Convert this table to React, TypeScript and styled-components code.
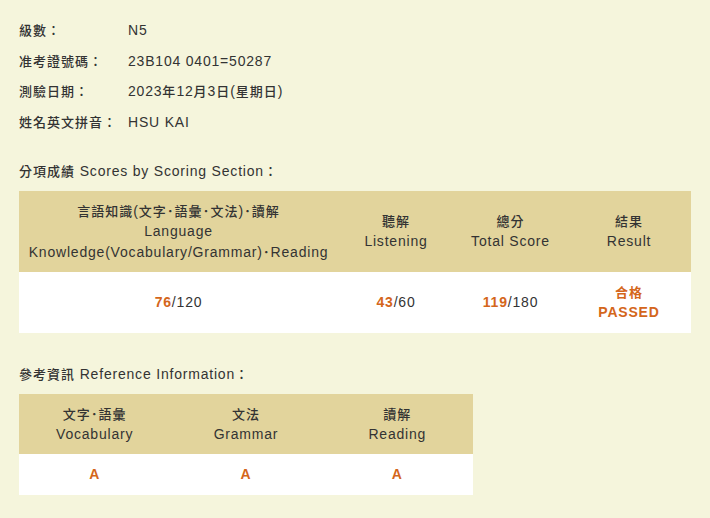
import React from "react";
import styled, { createGlobalStyle } from "styled-components";

const GlobalStyle = createGlobalStyle`
  html, body {
    margin: 0;
    padding: 0;
    background: #f5f5dc;
  }
  body {
    font-family: "Liberation Sans", "Noto Sans CJK TC", sans-serif;
    font-size: 14px;
    color: #333;
    letter-spacing: 0.8px;
  }
`;

const Page = styled.div`
  padding: 15px 19px 24px 19px;
  width: 672px;
`;

// CJK glyphs are set a bit smaller than the latin text, as on the original page
const Han = styled.span`
  font-size: 13px;
  font-weight: 500;
  letter-spacing: 1px;
  line-height: 1;
`;

const CJK = /([\u3000-\u30ff\u4e00-\u9fff\uff01-\uff5e]+)/;

const T: React.FC<{ children: string }> = ({ children }) => (
  <>
    {children
      .split(CJK)
      .filter(Boolean)
      .map((part, i) => (CJK.test(part) ? <Han key={i}>{part}</Han> : <React.Fragment key={i}>{part}</React.Fragment>))}
  </>
);

const Lines: React.FC<{ lines: string[] }> = ({ lines }) => (
  <>
    {lines.map((l, i) => (
      <React.Fragment key={i}>
        {i > 0 && <br />}
        <T>{l}</T>
      </React.Fragment>
    ))}
  </>
);

const InfoList = styled.dl`
  margin: 0;
`;

const InfoRow = styled.div`
  display: flex;
  line-height: 30.5px;
`;

const InfoLabel = styled.dt`
  width: 109px;
  flex-shrink: 0;
`;

const InfoValue = styled.dd`
  margin: 0;
`;

const SectionTitle = styled.h3<{ $top: number }>`
  margin: ${(p) => p.$top}px 0 10px 0;
  font-size: 14px;
  font-weight: 400;
  line-height: 20px;
`;

const Table = styled.table<{ $width: number }>`
  width: ${(p) => p.$width}px;
  border-collapse: collapse;
  table-layout: fixed;
`;

const HeadCell = styled.th<{ $width?: number }>`
  box-sizing: border-box;
  background: #e2d49c;
  font-weight: 400;
  padding: 10px 2px;
  line-height: 20.3px;
  text-align: center;
  width: ${(p) => (p.$width ? `${p.$width}px` : "auto")};
`;

const BodyCell = styled.td`
  background: #fff;
  padding: 10px 2px;
  line-height: 20.5px;
  text-align: center;
`;

const Mark = styled.span`
  color: #d4661b;
  font-weight: 700;

  ${Han} {
    font-weight: 700;
  }
`;

const Score: React.FC<{ got: number; max: number }> = ({ got, max }) => (
  <>
    <Mark>{got}</Mark>/{max}
  </>
);

const info = [
  ["級數：", "N5"],
  ["准考證號碼：", "23B104 0401=50287"],
  ["測驗日期：", "2023年12月3日(星期日)"],
  ["姓名英文拼音：", "HSU KAI"],
];

const sections = [
  { w: 319, lines: ["言語知識(文字･語彙･文法)･讀解", "Language", "Knowledge(Vocabulary/Grammar)･Reading"] },
  { w: 116, lines: ["聽解", "Listening"] },
  { w: 113, lines: ["總分", "Total Score"] },
  { w: 0, lines: ["結果", "Result"] },
];

const reference = [
  ["文字･語彙", "Vocabulary"],
  ["文法", "Grammar"],
  ["讀解", "Reading"],
];

export default function App() {
  return (
    <Page>
      <GlobalStyle />
      <InfoList>
        {info.map(([k, v]) => (
          <InfoRow key={k}>
            <InfoLabel>
              <T>{k}</T>
            </InfoLabel>
            <InfoValue>
              <T>{v}</T>
            </InfoValue>
          </InfoRow>
        ))}
      </InfoList>

      <SectionTitle $top={24}>
        <T>分項成績 Scores by Scoring Section：</T>
      </SectionTitle>
      <Table $width={672}>
        <thead>
          <tr>
            {sections.map((s, i) => (
              <HeadCell key={i} $width={s.w || undefined}>
                <Lines lines={s.lines} />
              </HeadCell>
            ))}
          </tr>
        </thead>
        <tbody>
          <tr>
            <BodyCell>
              <Score got={76} max={120} />
            </BodyCell>
            <BodyCell>
              <Score got={43} max={60} />
            </BodyCell>
            <BodyCell>
              <Score got={119} max={180} />
            </BodyCell>
            <BodyCell>
              <Mark>
                <Lines lines={["合格", "PASSED"]} />
              </Mark>
            </BodyCell>
          </tr>
        </tbody>
      </Table>

      <SectionTitle $top={31}>
        <T>參考資訊 Reference Information：</T>
      </SectionTitle>
      <Table $width={454}>
        <thead>
          <tr>
            {reference.map((lines, i) => (
              <HeadCell key={i}>
                <Lines lines={lines} />
              </HeadCell>
            ))}
          </tr>
        </thead>
        <tbody>
          <tr>
            {reference.map((_, i) => (
              <BodyCell key={i}>
                <Mark>A</Mark>
              </BodyCell>
            ))}
          </tr>
        </tbody>
      </Table>
    </Page>
  );
}
